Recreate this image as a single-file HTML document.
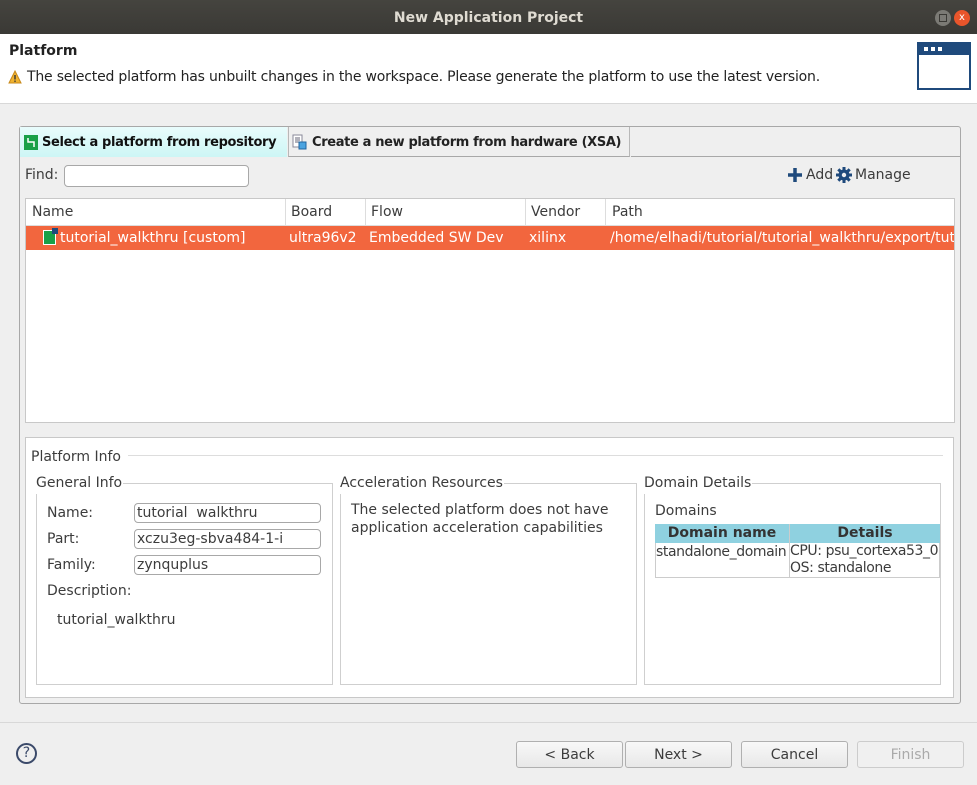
<!DOCTYPE html>
<html><head><meta charset="utf-8"><style>
*{box-sizing:border-box;margin:0;padding:0}
body{width:977px;height:785px;overflow:hidden;background:#efefef;font-family:"DejaVu Sans","Liberation Sans",sans-serif;font-size:14px;line-height:21px;color:#3c3c3c;position:relative}
.a{position:absolute;white-space:nowrap}
.box{position:absolute;border:1px solid #c8c8c8;background:#fff}
.inp{position:absolute;border:1px solid #a8a8a8;border-radius:4px;background:#fff;height:20px;padding-left:2px;line-height:18px;font-size:14px}
.btn{position:absolute;top:741px;height:27px;border:1px solid #b0b0b0;border-radius:3px;background:linear-gradient(#f8f8f8,#e8e8e8);text-align:center;line-height:26px}
.grp{position:absolute;border:1px solid #cfcfcf}
.lg{position:absolute;background:#fff;padding-right:1px}
</style></head><body>
<div class="a" style="left:0;top:0;width:977px;height:34px;background:linear-gradient(#45443f,#3a3935);"></div>
<div class="a" style="left:0;top:8px;width:977px;text-align:center;color:#dfdbd2;font-weight:bold;font-size:14px">New Application Project</div>
<div class="a" style="left:935px;top:10px;width:16px;height:16px;border-radius:50%;background:#7b7a75"></div>
<div class="a" style="left:939px;top:14px;width:8px;height:8px;border:1px solid #3a3935"></div>
<div class="a" style="left:954px;top:10px;width:16px;height:16px;border-radius:50%;background:#e9552b;color:#fff;font-size:10px;text-align:center;line-height:16px">x</div>
<div class="a" style="left:0;top:34px;width:977px;height:70px;background:#fff;border-bottom:1px solid #d8d8d8"></div>
<div class="a" style="left:9px;top:41px;font-weight:bold;color:#222">Platform</div>
<svg class="a" style="left:8px;top:70px" width="14" height="14"><path d="M7 1 L13 13 L1 13Z" fill="#f0b330" stroke="#c8891a"/><rect x="6.3" y="5" width="1.4" height="4.5" fill="#333"/><rect x="6.3" y="10.5" width="1.4" height="1.4" fill="#333"/></svg>
<div class="a" style="left:27px;top:67px;color:#222;letter-spacing:-0.2px">The selected platform has unbuilt changes in the workspace. Please generate the platform to use the latest version.</div>
<div class="a" style="left:917px;top:42px;width:54px;height:48px;border:2px solid #1f4a7c;background:#fff"></div>
<div class="a" style="left:917px;top:42px;width:54px;height:13px;background:#1f4a7c"></div>
<div class="a" style="left:924px;top:47px;width:4px;height:4px;background:#fff"></div>
<div class="a" style="left:931px;top:47px;width:4px;height:4px;background:#fff"></div>
<div class="a" style="left:938px;top:47px;width:4px;height:4px;background:#fff"></div>

<div class="a" style="left:19px;top:126px;width:942px;height:578px;border:1px solid #a8a8a8;border-radius:3px;background:#efefef"></div>
<div class="a" style="left:20px;top:127px;width:267px;height:30px;background:linear-gradient(#e9fcfc,#cdf6f5)"></div>
<div class="a" style="left:288px;top:127px;width:342px;height:30px;border-left:1px solid #b8b8b8;border-right:1px solid #b8b8b8;border-bottom:1px solid #a8a8a8"></div>
<div class="a" style="left:631px;top:156px;width:329px;height:1px;background:#a8a8a8"></div>
<div class="a" style="left:24px;top:135px;width:14px;height:15px;background:#1aa048"></div>
<svg class="a" style="left:24px;top:135px" width="14" height="15"><path d="M4 3 V7 H10 V12" stroke="#fff" fill="none" stroke-width="1.5"/></svg>
<div class="a" style="left:42px;top:132px;font-weight:bold;color:#111;font-size:13px;letter-spacing:-0.35px">Select a platform from repository</div>
<svg class="a" style="left:292px;top:134px" width="16" height="16"><rect x="1" y="1" width="9" height="12" fill="#fff" stroke="#889"/><path d="M3 4h5M3 6h5M3 8h5" stroke="#667"/><rect x="7" y="8" width="7" height="7" fill="#4aa3e0" stroke="#2066a0"/></svg>
<div class="a" style="left:312px;top:132px;font-weight:bold;color:#222;font-size:13px;letter-spacing:-0.35px">Create a new platform from hardware (XSA)</div>
<div class="a" style="left:25px;top:165px;">Find:</div>
<div class="inp" style="left:64px;top:165px;width:185px;height:22px"></div>
<svg class="a" style="left:787px;top:167px" width="16" height="16"><path d="M8 1V15M1 8H15" stroke="#1f4a7c" stroke-width="3.5"/></svg>
<div class="a" style="left:806px;top:165px;">Add</div>
<svg class="a" style="left:836px;top:167px" width="16" height="16"><circle cx="8" cy="8" r="5.5" fill="#1f4a7c"/><g stroke="#1f4a7c" stroke-width="3"><path d="M8 0V16M0 8H16M2.3 2.3L13.7 13.7M13.7 2.3L2.3 13.7"/></g><circle cx="8" cy="8" r="2.2" fill="#efefef"/></svg>
<div class="a" style="left:855px;top:165px;">Manage</div>

<div class="box" style="left:25px;top:198px;width:930px;height:225px"></div>
<div class="a" style="left:26px;top:199px;width:928px;height:27px;background:#fff;border-bottom:1px solid #ddd"></div>
<div class="a" style="left:285px;top:199px;width:1px;height:27px;background:#ddd"></div>
<div class="a" style="left:365px;top:199px;width:1px;height:27px;background:#ddd"></div>
<div class="a" style="left:525px;top:199px;width:1px;height:27px;background:#ddd"></div>
<div class="a" style="left:605px;top:199px;width:1px;height:27px;background:#ddd"></div>
<div class="a" style="left:32px;top:202px">Name</div>
<div class="a" style="left:291px;top:202px">Board</div>
<div class="a" style="left:371px;top:202px">Flow</div>
<div class="a" style="left:531px;top:202px">Vendor</div>
<div class="a" style="left:612px;top:202px">Path</div>
<div class="a" style="left:26px;top:226px;width:928px;height:24px;background:#f2663e"></div>
<div class="a" style="left:43px;top:230px;width:13px;height:15px;background:#1aa048;border:1px solid #fff"></div>
<div class="a" style="left:52px;top:228px;width:6px;height:6px;background:#1f4a7c"></div>
<div class="a" style="left:26px;top:228px;width:928px;height:21px;overflow:hidden;color:#fff">
<span class="a" style="left:34px">tutorial_walkthru [custom]</span>
<span class="a" style="left:263px">ultra96v2</span>
<span class="a" style="left:343px">Embedded SW Dev</span>
<span class="a" style="left:503px">xilinx</span>
<span class="a" style="left:584px">/home/elhadi/tutorial/tutorial_walkthru/export/tutorial</span>
</div>

<div class="box" style="left:25px;top:437px;width:929px;height:261px;background:#fff"></div>
<div class="a" style="left:31px;top:447px">Platform Info</div>
<div class="a" style="left:128px;top:455px;width:815px;height:1px;background:#ddd"></div>

<div class="grp" style="left:36px;top:483px;width:297px;height:202px"></div>
<div class="lg" style="left:36px;top:473px">General Info</div>
<div class="a" style="left:47px;top:503px">Name:</div>
<div class="a" style="left:47px;top:529px">Part:</div>
<div class="a" style="left:47px;top:555px">Family:</div>
<div class="a" style="left:47px;top:581px">Description:</div>
<div class="a" style="left:57px;top:610px">tutorial_walkthru</div>
<div class="inp" style="left:134px;top:503px;width:187px;line-height:19px">tutorial&nbsp; walkthru</div>
<div class="inp" style="left:134px;top:529px;width:187px;line-height:19px">xczu3eg-sbva484-1-i</div>
<div class="inp" style="left:134px;top:555px;width:187px;line-height:19px">zynquplus</div>

<div class="grp" style="left:340px;top:483px;width:297px;height:202px"></div>
<div class="lg" style="left:340px;top:473px">Acceleration Resources</div>
<div class="a" style="left:351px;top:501px;line-height:18px">The selected platform does not have<br>application acceleration capabilities</div>

<div class="grp" style="left:644px;top:483px;width:297px;height:202px"></div>
<div class="lg" style="left:644px;top:473px">Domain Details</div>
<div class="a" style="left:655px;top:501px">Domains</div>
<div class="a" style="left:655px;top:524px;width:285px;height:54px;border:1px solid #ccc"></div>
<div class="a" style="left:655px;top:524px;width:285px;height:19px;background:#8fd1e0"></div>
<div class="a" style="left:789px;top:524px;width:1px;height:54px;background:#ccc"></div>
<div class="a" style="left:655px;top:523px;width:134px;text-align:center;font-weight:bold;color:#333">Domain name</div>
<div class="a" style="left:790px;top:523px;width:150px;text-align:center;font-weight:bold;color:#333">Details</div>
<div class="a" style="left:656px;top:542px;width:133px;overflow:hidden;letter-spacing:-0.4px">standalone_domain</div>
<div class="a" style="left:790px;top:543px;width:150px;overflow:hidden;line-height:17px;letter-spacing:-0.4px">CPU: psu_cortexa53_0<br>OS: standalone</div>

<div class="a" style="left:0;top:722px;width:977px;height:1px;background:#d8d8d8"></div>
<div class="a" style="left:16px;top:743px;width:21px;height:21px;border:2px solid #3b4a6a;border-radius:50%;text-align:center;line-height:17px;font-size:14px;color:#3b4a6a">?</div>
<div class="btn" style="left:516px;width:107px">&lt; Back</div>
<div class="btn" style="left:625px;width:107px">Next &gt;</div>
<div class="btn" style="left:741px;width:107px">Cancel</div>
<div class="btn" style="left:857px;width:107px;color:#aaa;background:#f0f0f0;border-color:#ccc">Finish</div>
</body></html>
